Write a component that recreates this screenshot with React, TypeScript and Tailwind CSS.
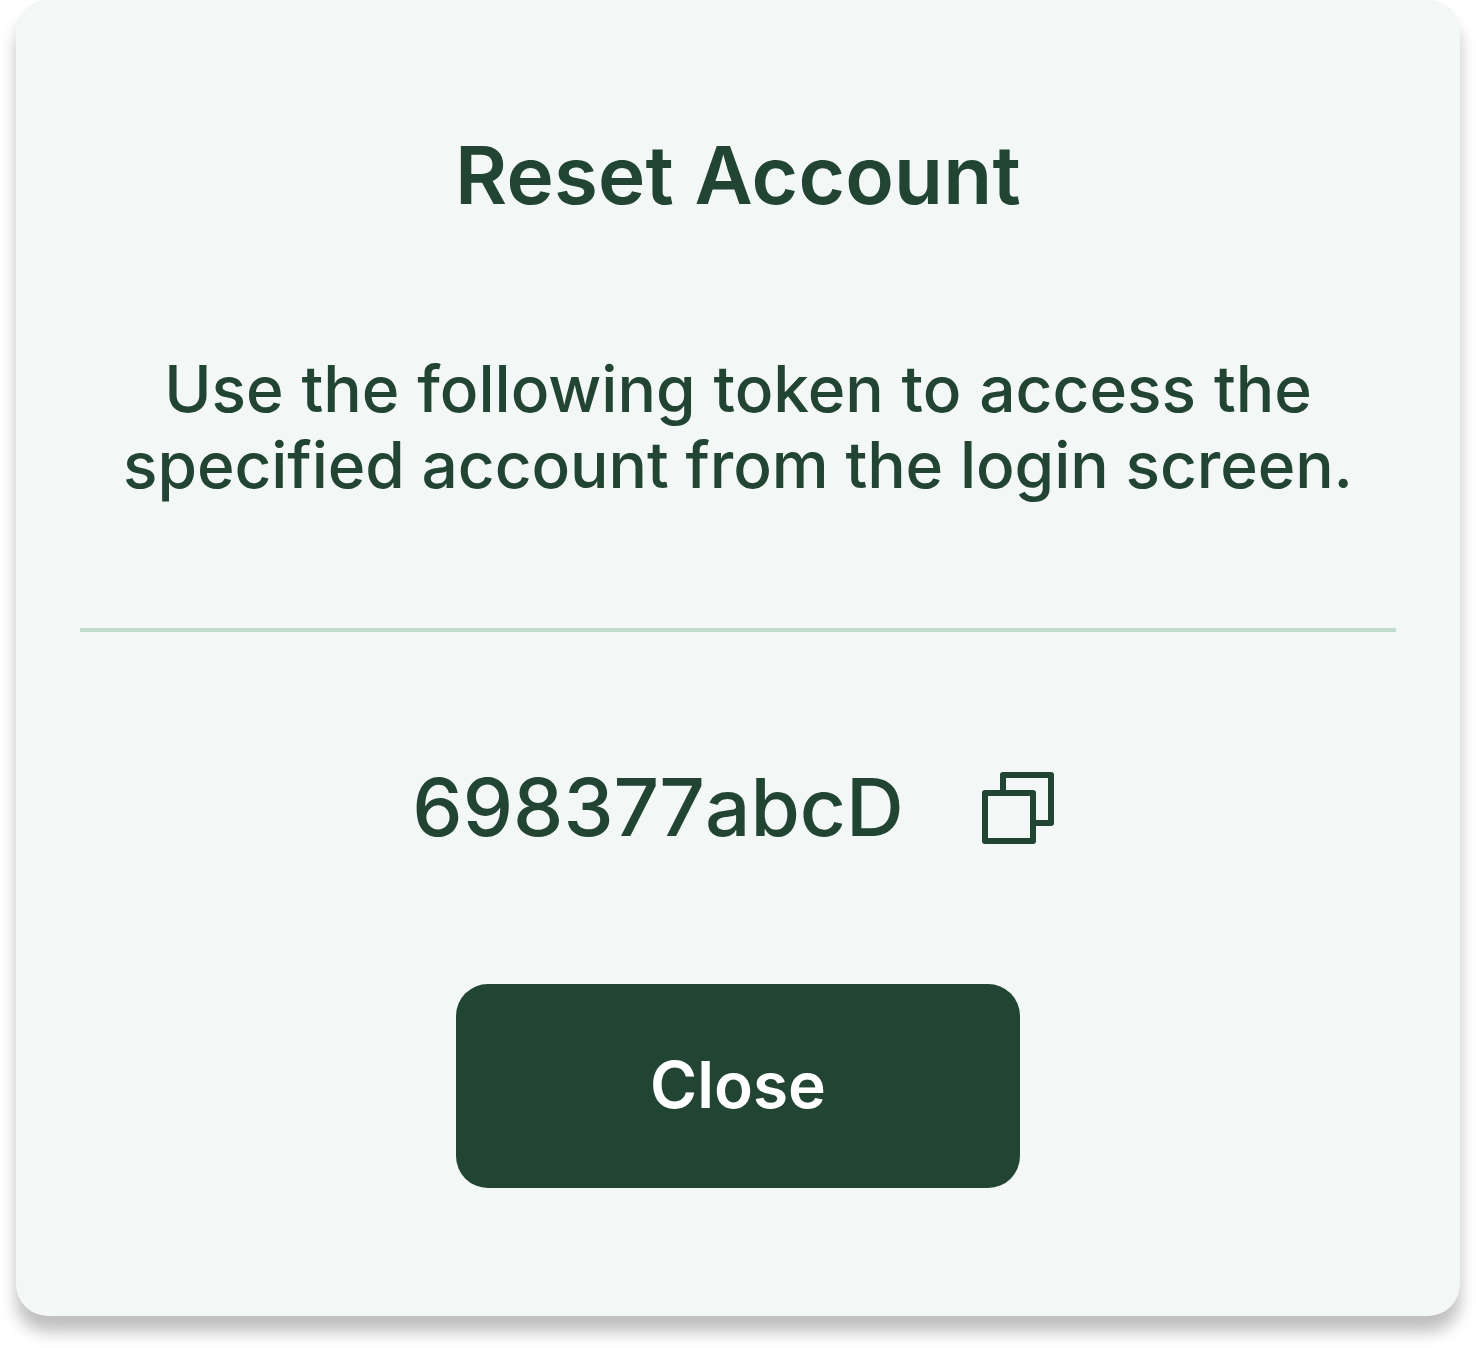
export default function App() {
  return (
    <main className="h-[1348px] w-[1476px] overflow-hidden bg-white px-4 font-['Inter',sans-serif] text-[#224433]">
      <section className="flex h-[1316px] flex-col items-center rounded-[32px] bg-[#f3f7f5] px-16 shadow-[0_16px_16px_rgba(0,0,0,0.25)]">
        <h1 className="mt-[126px] text-[80px] leading-[97px] font-semibold tracking-[0.2px] whitespace-nowrap">
          Reset Account
        </h1>
        <p className="mt-32 text-center text-[64px] leading-[76px] font-medium whitespace-nowrap">
          <span className="[word-spacing:0.8px]">Use the following token to access the</span>
          <br />
          <span className="tracking-[-0.1px]">specified account from the login screen.</span>
        </p>
        <hr className="mt-[125px] h-1 w-full border-0 bg-[#c2dbcf]" />
        <div className="mt-32 flex h-24 items-center gap-16">
          <span className="-mt-[3px] text-[80px] leading-[97px] font-medium [font-kerning:none]">698377abcD</span>
          <button aria-label="Copy token" className="-mr-0.5 ml-0.5 size-24">
            <svg viewBox="0 0 96 96" className="size-24" fill="none" stroke="currentColor" strokeWidth="6" strokeLinejoin="round">
              <path d="M33 33V15H81V63H63" />
              <path d="M15 33H63V81H15Z" />
            </svg>
          </button>
        </div>
        <button className="mt-32 flex h-[204px] w-[564px] items-center justify-center rounded-[32px] bg-[#224433] pb-[3px] text-[64px] leading-[77px] font-semibold text-white">
          Close
        </button>
      </section>
    </main>
  );
}
